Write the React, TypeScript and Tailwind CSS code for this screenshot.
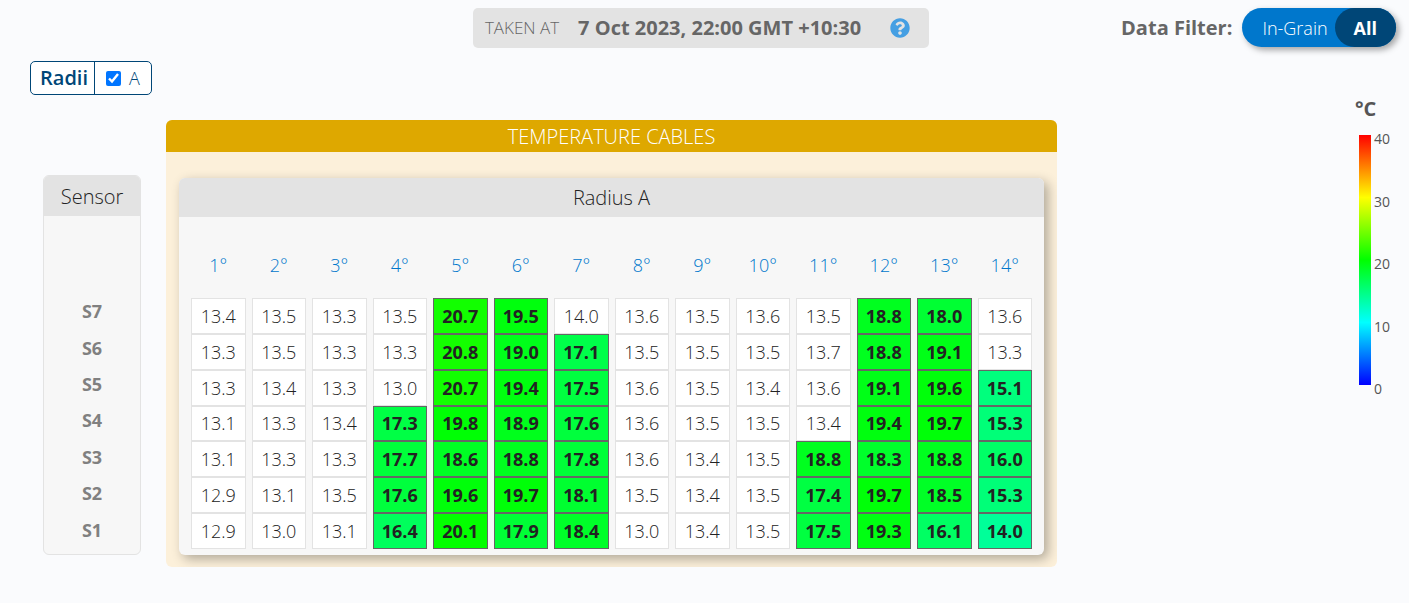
import { useState } from 'react';
import { FaQuestionCircle } from 'react-icons/fa';

type Cable = {
    id: number;
    // number of sensors covered by grain, counted from the bottom
    level: number;
    // readings from the top sensor down to the bottom one
    temps: number[];
};

const SENSORS = ['S7', 'S6', 'S5', 'S4', 'S3', 'S2', 'S1'];
const SCALE = [40, 30, 20, 10, 0];

const CABLES: Cable[] = [
    { id: 1, level: 0, temps: [13.4, 13.3, 13.3, 13.1, 13.1, 12.9, 12.9] },
    { id: 2, level: 0, temps: [13.5, 13.5, 13.4, 13.3, 13.3, 13.1, 13.0] },
    { id: 3, level: 0, temps: [13.3, 13.3, 13.3, 13.4, 13.3, 13.5, 13.1] },
    { id: 4, level: 4, temps: [13.5, 13.3, 13.0, 17.3, 17.7, 17.6, 16.4] },
    { id: 5, level: 7, temps: [20.7, 20.8, 20.7, 19.8, 18.6, 19.6, 20.1] },
    { id: 6, level: 7, temps: [19.5, 19.0, 19.4, 18.9, 18.8, 19.7, 17.9] },
    { id: 7, level: 6, temps: [14.0, 17.1, 17.5, 17.6, 17.8, 18.1, 18.4] },
    { id: 8, level: 0, temps: [13.6, 13.5, 13.6, 13.6, 13.6, 13.5, 13.0] },
    { id: 9, level: 0, temps: [13.5, 13.5, 13.5, 13.5, 13.4, 13.4, 13.4] },
    { id: 10, level: 0, temps: [13.6, 13.5, 13.4, 13.5, 13.5, 13.5, 13.5] },
    { id: 11, level: 3, temps: [13.5, 13.7, 13.6, 13.4, 18.8, 17.4, 17.5] },
    { id: 12, level: 7, temps: [18.8, 18.8, 19.1, 19.4, 18.3, 19.7, 19.3] },
    { id: 13, level: 7, temps: [18.0, 19.1, 19.6, 19.7, 18.8, 18.5, 16.1] },
    { id: 14, level: 5, temps: [13.6, 13.3, 15.1, 15.3, 16.0, 15.3, 14.0] },
];

// blue 0, cyan 10, green 20, yellow 30, red 40
function tempColor(t: number) {
    const part = (v: number) => Math.round(Math.min(Math.max(v, 0), 1) * 255);
    if (t < 10) return `rgb(0, ${part(t / 10)}, 255)`;
    if (t < 20) return `rgb(0, 255, ${part((20 - t) / 10)})`;
    if (t < 30) return `rgb(${part((t - 20) / 10)}, 255, 0)`;
    return `rgb(255, ${part((40 - t) / 10)}, 0)`;
}

function TempCell({ temp, inGrain, hidden }: { temp: number; inGrain: boolean; hidden: boolean }) {
    if (inGrain) {
        return (
            <td
                className="border border-[#666] text-center font-bold"
                style={{ backgroundColor: tempColor(temp) }}
            >
                {temp.toFixed(1)}
            </td>
        );
    }
    return (
        <td className="border border-[#e3e3e3] bg-white text-center font-[350]">
            {hidden ? '' : temp.toFixed(1)}
        </td>
    );
}

function Legend() {
    return (
        <aside className="w-[54px] shrink-0 pt-9 text-[#555]">
            <h2 className="text-xl leading-6 font-bold">°C</h2>
            <div className="mt-2 flex gap-[3px] pl-1">
                <div className="mt-[6px] h-[250px] w-3 bg-[linear-gradient(to_top,#00f,#0ff,#0f0,#ff0,#f00)]" />
                <ul className="flex h-[270px] flex-col justify-between text-sm leading-5">
                    {SCALE.map((t) => (
                        <li key={t}>{t}</li>
                    ))}
                </ul>
            </div>
        </aside>
    );
}

export default function App() {
    const [filter, setFilter] = useState<'grain' | 'all'>('all');
    const [showA, setShowA] = useState(true);

    return (
        <main className="min-h-screen bg-[#fafbfd] pt-2 font-['Open_Sans',sans-serif] text-[#222]">
            <header className="grid grid-cols-[1fr_auto_1fr] items-start pr-[13px] pl-[6px]">
                <div className="col-start-2 flex h-10 items-center rounded-[5px] bg-[#e3e3e3] pr-[19px] pl-3 text-[#666]">
                    <span className="text-[17px] font-[350]">TAKEN AT</span>
                    <time className="ml-[19px] text-xl font-bold">7 Oct 2023, 22:00 GMT +10:30</time>
                    <button type="button" aria-label="Help" className="ml-[29px] text-[#459fe3]">
                        <FaQuestionCircle size={20} />
                    </button>
                </div>
                <div className="flex items-center justify-end gap-[10px]">
                    <span className="text-xl font-bold text-[#666]">Data Filter:</span>
                    <div className="flex h-[39px] rounded-full bg-[#0077cc] text-lg text-white shadow-[3px_3px_6px_rgba(0,0,0,0.35)]">
                        <button
                            type="button"
                            aria-pressed={filter === 'grain'}
                            onClick={() => setFilter('grain')}
                            className={filter === 'grain' ? 'rounded-full bg-[#004677] px-5 font-bold' : 'pr-[7px] pl-5 font-[350]'}
                        >
                            In-Grain
                        </button>
                        <button
                            type="button"
                            aria-pressed={filter === 'all'}
                            onClick={() => setFilter('all')}
                            className={filter === 'all' ? 'rounded-full bg-[#004677] px-[19px] font-bold' : 'pr-5 pl-[7px] font-[350]'}
                        >
                            All
                        </button>
                    </div>
                </div>
            </header>

            <div className="flex justify-between gap-6 pt-[13px] pl-[30px]">
                <div>
                    <div className="flex h-[34px] w-fit items-stretch rounded-[5px] border border-[#004677] bg-white text-xl text-[#004677]">
                        <span className="flex items-center border-r border-[#004677] pr-[6px] pl-[9px] font-semibold">
                            Radii
                        </span>
                        <label className="flex items-center gap-2 px-[11px] text-lg font-[350]">
                            <input
                                type="checkbox"
                                className="size-[15px] accent-[#0075ff]"
                                checked={showA}
                                onChange={(e) => setShowA(e.target.checked)}
                            />
                            A
                        </label>
                    </div>

                    <div className="mt-[25px] flex gap-[25px] pl-[13px]">
                        <section className="mt-[55px] mb-3 flex w-[98px] flex-col overflow-hidden rounded-md border border-[#e3e3e3] bg-[#f7f7f7] text-center">
                            <h2 className="bg-[#e3e3e3] pt-[7px] pb-[5px] text-xl leading-7 font-light">Sensor</h2>
                            <ul className="mt-[77px] mb-[6px] flex flex-1 flex-col text-lg font-bold text-[#808080]">
                                {SENSORS.map((s) => (
                                    <li key={s} className="flex flex-1 items-center justify-center">
                                        {s}
                                    </li>
                                ))}
                            </ul>
                        </section>

                        <section className="w-[891px] overflow-hidden rounded-md bg-[#fcf0da]">
                            <h2 className="bg-[#dea800] pt-[2px] text-center text-xl leading-[30px] font-light text-white">
                                TEMPERATURE CABLES
                            </h2>
                            {showA && (
                                <div className="mx-[13px] mt-[26px] mb-3 rounded-md bg-[#f7f7f7] pb-[6px] shadow-[4px_4px_12px_rgba(0,0,0,0.3)]">
                                    <h3 className="rounded-t-md bg-[#e3e3e3] pt-[6px] pb-[5px] text-center text-xl leading-7 font-light">
                                        Radius A
                                    </h3>
                                    <div className="px-[6px]">
                                        <table className="h-[332px] w-full table-fixed border-separate border-spacing-x-[6px] border-spacing-y-0 text-lg leading-6">
                                            <thead>
                                                <tr>
                                                    {CABLES.map((c) => (
                                                        <th key={c.id} scope="col" className="h-[81px] pt-[14px] font-[350]">
                                                            <a href={`#cable-${c.id}`} className="text-[#0077cc]">
                                                                {c.id}°
                                                            </a>
                                                        </th>
                                                    ))}
                                                </tr>
                                            </thead>
                                            <tbody>
                                                {SENSORS.map((s, row) => (
                                                    <tr key={s}>
                                                        {CABLES.map((c) => {
                                                            const inGrain = SENSORS.length - row <= c.level;
                                                            return (
                                                                <TempCell
                                                                    key={c.id}
                                                                    temp={c.temps[row]}
                                                                    inGrain={inGrain}
                                                                    hidden={filter === 'grain'}
                                                                />
                                                            );
                                                        })}
                                                    </tr>
                                                ))}
                                            </tbody>
                                        </table>
                                    </div>
                                </div>
                            )}
                        </section>
                    </div>
                </div>

                <Legend />
            </div>
        </main>
    );
}
